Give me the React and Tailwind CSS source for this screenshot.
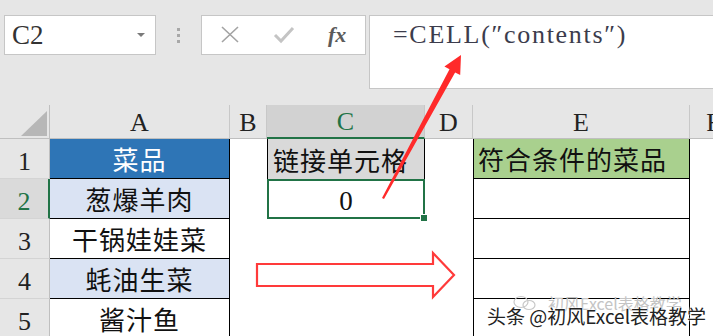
import React from "react";

const serif = "font-['Liberation_Serif',serif]";
const cjk = "font-['Noto_Sans_CJK_SC',sans-serif]";

const cols = ["A", "B", "C", "D", "E", "F"];

const dishes = [
  { name: "葱爆羊肉", bg: "bg-[#dae3f3]" },
  { name: "干锅娃娃菜", bg: "bg-white" },
  { name: "蚝油生菜", bg: "bg-[#dae3f3]" },
  { name: "酱汁鱼", bg: "bg-white" },
];

const App = () => {
  return (
    <div className="relative w-[713px] h-[336px] overflow-hidden bg-white">
      {/* FORMULA BAR */}
      <div className="h-[105px] bg-[#e6e6e6] flex items-start pt-[15px] pl-[4px]">
        <div className="w-[152px] h-[40px] bg-white border border-[#c6c6c6] flex items-center justify-between pl-[7px] pr-[10px]">
          <span className={`${serif} text-[27px] leading-[30px] text-[#333]`}>C2</span>
          <span className="w-0 h-0 border-l-[4px] border-r-[4px] border-t-[4px] border-l-transparent border-r-transparent border-t-[#7a7a7a]"></span>
        </div>

        <div className="w-[45px] h-[40px] flex flex-col items-center justify-center gap-[3px]">
          <span className="w-[3px] h-[3px] bg-[#a8a8a8]"></span>
          <span className="w-[3px] h-[3px] bg-[#a8a8a8]"></span>
          <span className="w-[3px] h-[3px] bg-[#a8a8a8]"></span>
        </div>

        <div className="w-[165px] h-[40px] bg-white border border-[#c6c6c6] flex items-center pl-[18px]">
          <svg width="20" height="18" viewBox="0 0 20 18">
            <path d="M2 1 L18 16 M18 1 L2 16" stroke="#a3a3a3" strokeWidth="1.6" fill="none" />
          </svg>
          <svg width="22" height="18" viewBox="0 0 22 18" className="ml-[33px]">
            <path d="M2 9 L8 15 L20 2" stroke="#c4c4c4" strokeWidth="3" fill="none" />
          </svg>
          <span className={`${serif} italic font-bold text-[22px] leading-none text-[#5b5b5b] ml-[33px]`}>fx</span>
        </div>

        <div className="flex-1 h-[74px] ml-[3px] bg-white border border-r-0 border-[#c6c6c6] pl-[23px] pt-[4px]">
          <span className={`${serif} text-[26px] leading-[30px] tracking-[1.7px] text-[#3c3c4c]`}>
            =CELL(″contents″)
          </span>
        </div>
      </div>

      {/* SHEET GRID */}
      <div className="grid grid-cols-[50px_180px_37px_158px_48px_217px_48px] grid-rows-[34px_40px_40px_40px_40px_40px] w-[738px]">
        {/* header row */}
        <div className="bg-[#e6e6e6] border-r border-b border-[#bfbfbf] flex items-end justify-end">
          <svg width="30" height="30" viewBox="0 0 30 30">
            <polygon points="2,28 28,28 28,3" fill="#b7b7b7" />
          </svg>
        </div>
        {cols.map((c) =>
          c === "C" ? (
            <div
              key={c}
              className={`${serif} bg-[#d2d2d2] border-r border-[#c8c8c8] border-b-2 border-b-[#217346] flex items-end justify-center text-[26px] leading-[30px] text-[#217346]`}
            >
              {c}
            </div>
          ) : (
            <div
              key={c}
              className={`${serif} bg-[#e6e6e6] border-r border-[#c8c8c8] border-b border-b-[#bfbfbf] flex items-end justify-center text-[26px] leading-[30px] text-[#222]`}
            >
              {c}
            </div>
          )
        )}

        {/* row 1 */}
        <div className={`${serif} bg-[#e6e6e6] border-r border-[#bfbfbf] border-b border-b-[#d4d4d4] flex items-end justify-center text-[26px] leading-[32px] text-[#222]`}>
          1
        </div>
        <div className={`${cjk} bg-[#2e75b6] border-r border-b border-black flex items-center justify-center text-[26px] tracking-[1px] text-white`}>
          菜品
        </div>
        <div className="bg-white"></div>
        <div className={`${cjk} bg-[#d9d9d9] border-l border-r border-black flex items-center pl-[5px] text-[26px] tracking-[1px] text-[#111] whitespace-nowrap`}>
          链接单元格
        </div>
        <div className="bg-white"></div>
        <div className={`${cjk} bg-[#a9d08e] border-l border-r border-b border-black flex items-center pl-[4px] text-[26px] tracking-[1px] text-[#111] whitespace-nowrap`}>
          符合条件的菜品
        </div>
        <div className="bg-white"></div>

        {/* rows 2-5 */}
        {dishes.map((d, i) => {
          const row = i + 2;
          const selected = row === 2;
          return (
            <React.Fragment key={row}>
              <div
                className={
                  selected
                    ? `${serif} bg-[#dadada] border-r-2 border-r-[#217346] border-b border-b-[#d4d4d4] flex items-end justify-center text-[26px] leading-[32px] text-[#217346]`
                    : `${serif} bg-[#e6e6e6] border-r border-[#bfbfbf] border-b border-b-[#d4d4d4] flex items-end justify-center text-[26px] leading-[32px] text-[#222]`
                }
              >
                {row}
              </div>
              <div className={`${cjk} ${d.bg} border-r border-b border-black flex items-center justify-center text-[26px] tracking-[1px] text-[#111] whitespace-nowrap`}>
                {d.name}
              </div>
              <div className="bg-white"></div>
              {selected ? (
                <div className={`${serif} relative bg-white border-2 border-[#217346] flex items-end justify-center text-[27px] leading-[32px] text-[#111]`}>
                  0
                  <span className="absolute -right-[5px] -bottom-[5px] w-[8px] h-[8px] bg-[#217346] border border-white"></span>
                </div>
              ) : (
                <div className="bg-white"></div>
              )}
              <div className="bg-white"></div>
              <div className="bg-white border-l border-r border-b border-black"></div>
              <div className="bg-white"></div>
            </React.Fragment>
          );
        })}
      </div>

      {/* RED ARROWS (overlay) */}
      <svg className="absolute inset-0 pointer-events-none" width="713" height="336" viewBox="0 0 713 336">
        <polygon
          points="382,198 449.5,69.2 444.4,66.5 461,55 460.2,75.1 455.1,72.4 384,199"
          fill="#ff2a2a"
        />
        <polygon
          points="257,264 433,264 433,253 454,275 433,297 433,286 257,286"
          fill="none"
          stroke="#ff3a3a"
          strokeWidth="2.2"
        />
      </svg>

      {/* WATERMARKS (overlay) */}
      <div className="absolute left-[512px] top-[294px] flex items-center gap-[6px] pointer-events-none">
        <svg width="30" height="16" viewBox="0 0 30 16">
          <ellipse cx="9" cy="7" rx="7" ry="5.5" fill="none" stroke="#c8c8c8" strokeWidth="1.2" />
          <ellipse cx="17" cy="10" rx="6" ry="4.5" fill="none" stroke="#c8c8c8" strokeWidth="1.2" />
        </svg>
        <span className={`${cjk} text-[16px] leading-[18px] text-[#c4c4c4] whitespace-nowrap`}>初风Excel表格教学</span>
      </div>
      <div
        className={`${cjk} absolute left-[487px] top-[305px] text-[19px] leading-[22px] text-[#222] whitespace-nowrap pointer-events-none [text-shadow:0_0_2px_#fff,0_0_2px_#fff,0_0_2px_#fff]`}
      >
        头条 @初风Excel表格教学
      </div>
    </div>
  );
};

export default App;
